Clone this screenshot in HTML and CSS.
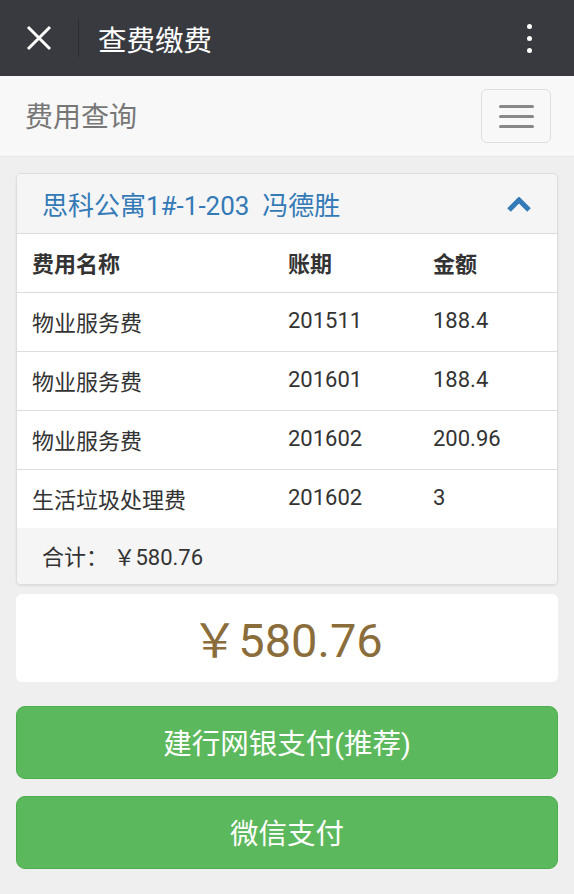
FILE: index.html
```html
<!DOCTYPE html>
<html lang="zh-CN">
<head>
    <meta charset="UTF-8">
    <meta name="viewport" content="width=device-width, initial-scale=1.0">
    <title>查费缴费</title>
    <link rel="stylesheet" href="styles.css">
</head>
<body>
    <div class="topbar">
        <span class="close">
            <svg width="26" height="26" viewBox="0 0 26 26"><path d="M2 2L24 24M24 2L2 24" stroke="#fff" stroke-width="3" fill="none"/></svg>
        </span>
        <span class="divider"></span>
        <span class="title">查费缴费</span>
        <span class="more"><i></i><i></i><i></i></span>
    </div>

    <div class="navbar">
        <span class="brand">费用查询</span>
        <button class="toggle"><i></i><i></i><i></i></button>
    </div>

    <div class="main">
        <div class="panel">
            <div class="panel-heading">
                <span>思科公寓1#-1-203&nbsp;&nbsp;冯德胜</span>
                <svg class="chevron" width="24" height="16" viewBox="0 0 24 16"><path d="M2 13L12 3L22 13" stroke="#337ab7" stroke-width="5" fill="none"/></svg>
            </div>
            <div class="row head">
                <span>费用名称</span><span>账期</span><span>金额</span>
            </div>
            <div class="row">
                <span>物业服务费</span><span>201511</span><span>188.4</span>
            </div>
            <div class="row">
                <span>物业服务费</span><span>201601</span><span>188.4</span>
            </div>
            <div class="row">
                <span>物业服务费</span><span>201602</span><span>200.96</span>
            </div>
            <div class="row">
                <span>生活垃圾处理费</span><span>201602</span><span>3</span>
            </div>
            <div class="panel-footer">合计： ￥580.76</div>
        </div>

        <div class="amount">￥580.76</div>

        <button class="btn">建行网银支付(推荐)</button>
        <button class="btn">微信支付</button>
    </div>
</body>
</html>
```

FILE: styles.css
```css
body {
    margin: 0;
    padding: 0;
    background-color: #efefef;
    font-family: Roboto, "Noto Sans CJK SC", sans-serif;
    color: #333;
}
.topbar {
    height: 76px;
    background-color: #393a3f;
    display: flex;
    align-items: center;
    color: #fff;
}
.close {
    display: flex;
    margin-left: 26px;
}
.divider {
    width: 1px;
    height: 38px;
    background-color: #2a2b2f;
    margin-left: 26px;
}
.title {
    font-size: 28.5px;
    margin-left: 19px;
    flex: 1;
}
.more {
    display: flex;
    flex-direction: column;
    gap: 7px;
    margin-right: 42px;
}
.more i {
    width: 5px;
    height: 5px;
    border-radius: 50%;
    background: #fff;
}
.navbar {
    height: 80px;
    background-color: #f8f8f8;
    border-bottom: 1px solid #e7e7e7;
    display: flex;
    align-items: center;
    justify-content: space-between;
}
.brand {
    font-size: 28px;
    color: #777;
    margin-left: 25px;
    padding-bottom: 2px;
}
.toggle {
    width: 70px;
    height: 54px;
    margin-right: 23px;
    border: 1px solid #ddd;
    border-radius: 6px;
    background: transparent;
    display: flex;
    flex-direction: column;
    align-items: center;
    justify-content: center;
    gap: 7px;
    padding: 0;
}
.toggle i {
    width: 35px;
    height: 3px;
    border-radius: 2px;
    background: #888;
}
.main {
    padding: 16px 16px;
}
.panel {
    background: #fff;
    border: 1px solid #ddd;
    border-radius: 5px;
    box-shadow: 0 1px 2px rgba(0,0,0,0.08);
    overflow: hidden;
}
.panel-heading {
    height: 60px;
    background: #f5f5f5;
    border-bottom: 1px solid #ddd;
    display: flex;
    align-items: center;
    justify-content: space-between;
    padding: 0 26px 0 25px;
    color: #337ab7;
    font-size: 26px;
    box-sizing: border-box;
}
.chevron {
    margin-top: 2px;
}
.row {
    display: grid;
    grid-template-columns: 256px 145px 1fr;
    align-items: center;
    padding: 0 0 3px 15px;
    height: 55px;
    border-top: 1px solid #ddd;
    font-size: 22px;
}
.panel-heading + .row {
    border-top: none;
}
.row.head {
    font-weight: bold;
}
.panel-footer {
    height: 54px;
    padding-bottom: 2px;
    background: #f5f5f5;
    display: flex;
    align-items: center;
    padding-left: 25px;
    font-size: 22px;
}
.amount {
    margin-top: 9px;
    height: 88px;
    background: #fff;
    border-radius: 6px;
    display: flex;
    align-items: center;
    justify-content: center;
    font-size: 47px;
    color: #8a6d3b;
    padding-bottom: 4px;
    box-sizing: border-box;
}
.btn {
    display: block;
    width: 100%;
    height: 73px;
    margin-top: 24px;
    background-color: #5cb85c;
    border: 1px solid #4cae4c;
    border-radius: 9px;
    color: #fff;
    font-family: Roboto, "Noto Sans CJK SC", sans-serif;
    font-size: 28.5px;
    padding-bottom: 3px;
}
.btn + .btn {
    margin-top: 17px;
}
```
